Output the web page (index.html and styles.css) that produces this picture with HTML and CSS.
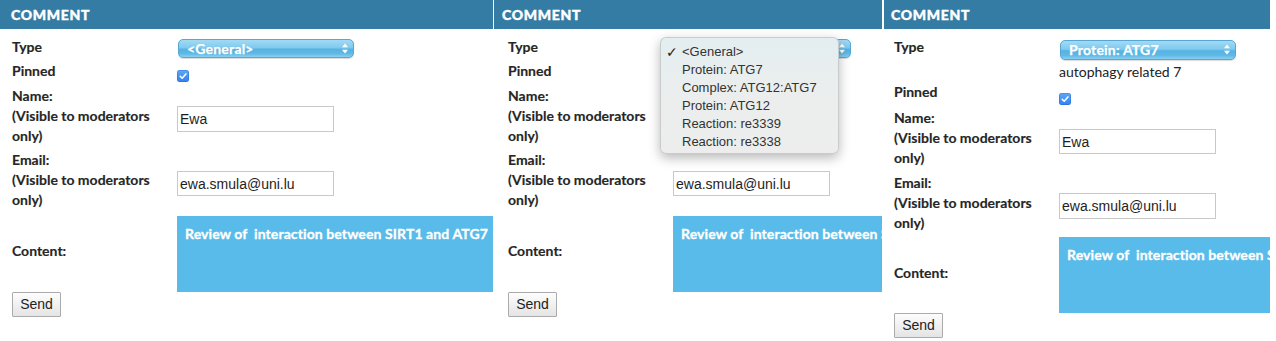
FILE: index.html
```html
<!DOCTYPE html>
<html lang="en">
<head>
<meta charset="utf-8">
<title>Comment</title>
<link rel="stylesheet" href="styles.css">
</head>
<body>
<div class="screens">

  <section class="panel p1">
    <header class="panel-head">COMMENT</header>
    <div class="form">
      <div class="label label-top">Type</div>
      <div class="field field-top">
        <div class="select"><span>&lt;General&gt;</span><svg class="arrows" width="6" height="11" viewBox="0 0 6 11"><path d="M0 4.2 L3 0.5 L6 4.2Z M0 6.8 L3 10.5 L6 6.8Z" fill="#fff"/></svg></div>
      </div>
      <div class="label label-top">Pinned</div>
      <div class="field field-top"><span class="check"><svg width="12" height="12" viewBox="0 0 12 12"><path d="M3.2 6.3 L5.2 8.3 L8.9 3.9" fill="none" stroke="#fff" stroke-width="1.5" stroke-linecap="round" stroke-linejoin="round"/></svg></span></div>
      <div class="label">Name:<br>(Visible to moderators only)</div>
      <div class="field"><input class="text-input" type="text" value="Ewa"></div>
      <div class="label">Email:<br>(Visible to moderators only)</div>
      <div class="field"><input class="text-input" type="text" value="ewa.smula@uni.lu"></div>
      <div class="label label-content">Content:</div>
      <div class="field field-top"><div class="content-box">Review of  interaction between SIRT1 and ATG7</div></div>
    </div>
    <div class="actions"><button class="send" type="button">Send</button></div>
  </section>

  <section class="panel p2">
    <header class="panel-head">COMMENT</header>
    <div class="form">
      <div class="label label-top">Type</div>
      <div class="field field-top">
        <div class="select sel-p2"><span>&lt;General&gt;</span><svg class="arrows" width="6" height="11" viewBox="0 0 6 11"><path d="M0 4.2 L3 0.5 L6 4.2Z M0 6.8 L3 10.5 L6 6.8Z" fill="#fff"/></svg></div>
      </div>
      <div class="label label-top">Pinned</div>
      <div class="field field-top"><span class="check"><svg width="12" height="12" viewBox="0 0 12 12"><path d="M3.2 6.3 L5.2 8.3 L8.9 3.9" fill="none" stroke="#fff" stroke-width="1.5" stroke-linecap="round" stroke-linejoin="round"/></svg></span></div>
      <div class="label">Name:<br>(Visible to moderators only)</div>
      <div class="field"><input class="text-input" type="text" value="Ewa"></div>
      <div class="label">Email:<br>(Visible to moderators only)</div>
      <div class="field"><input class="text-input" type="text" value="ewa.smula@uni.lu"></div>
      <div class="label label-content">Content:</div>
      <div class="field field-top"><div class="content-box">Review of  interaction between SIRT1 and ATG7</div></div>
    </div>
    <div class="actions"><button class="send" type="button">Send</button></div>

    <ul class="menu">
      <li class="menu-item selected"><span class="tick">✓</span>&lt;General&gt;</li>
      <li class="menu-item">Protein: ATG7</li>
      <li class="menu-item">Complex: ATG12:ATG7</li>
      <li class="menu-item">Protein: ATG12</li>
      <li class="menu-item">Reaction: re3339</li>
      <li class="menu-item">Reaction: re3338</li>
    </ul>
  </section>

  <section class="panel p3">
    <header class="panel-head">COMMENT</header>
    <div class="form">
      <div class="label label-top">Type</div>
      <div class="field field-top">
        <div class="select"><span>Protein: ATG7</span><svg class="arrows" width="6" height="11" viewBox="0 0 6 11"><path d="M0 4.2 L3 0.5 L6 4.2Z M0 6.8 L3 10.5 L6 6.8Z" fill="#fff"/></svg></div>
        <div class="desc">autophagy related 7</div>
      </div>
      <div class="label label-top">Pinned</div>
      <div class="field field-top"><span class="check"><svg width="12" height="12" viewBox="0 0 12 12"><path d="M3.2 6.3 L5.2 8.3 L8.9 3.9" fill="none" stroke="#fff" stroke-width="1.5" stroke-linecap="round" stroke-linejoin="round"/></svg></span></div>
      <div class="label">Name:<br>(Visible to moderators only)</div>
      <div class="field"><input class="text-input" type="text" value="Ewa"></div>
      <div class="label">Email:<br>(Visible to moderators only)</div>
      <div class="field"><input class="text-input" type="text" value="ewa.smula@uni.lu"></div>
      <div class="label label-content">Content:</div>
      <div class="field field-top"><div class="content-box">Review of  interaction between SIRT1 and ATG7</div></div>
    </div>
    <div class="actions"><button class="send" type="button">Send</button></div>
  </section>

</div>
</body>
</html>
```

FILE: styles.css
```css
html, body {
  margin: 0;
  padding: 0;
  background: #fff;
}

body {
  font-family: Lato, "Liberation Sans", sans-serif;
  color: #2a2a2a;
}

.screens {
  display: flex;
  width: 1276px;
  height: 341px;
  overflow: hidden;
}

.panel {
  position: relative;
  flex: none;
  height: 341px;
  overflow: hidden;
}

.p1 { width: 493px; }
.p2 { width: 388px; margin-left: 1px; }
.p3 { width: 386px; margin-left: 2px; }

.panel-head {
  height: 29px;
  background: #357ca5;
  color: #fff;
  font-weight: 900;
  font-size: 14px;
  display: flex;
  align-items: center;
  letter-spacing: 0.7px;
  -webkit-text-stroke: 0.4px #fff;
}

.p1 .panel-head { padding-left: 11px; }
.p2 .panel-head { padding-left: 8px; }
.p3 .panel-head { padding-left: 7px; }

.form {
  display: grid;
  grid-template-columns: 165px 1fr;
  row-gap: 4.5px;
  padding-top: 7.5px;
}

.p1 .form, .p1 .actions { padding-left: 12px; }
.p2 .form, .p2 .actions { padding-left: 14px; }
.p3 .form, .p3 .actions { padding-left: 10px; }
.p3 .form { padding-top: 8.3px; }

.label {
  font-weight: 700;
  font-size: 14px;
  line-height: 20px;
  align-self: center;
  color: #262626;
  -webkit-text-stroke: 0.15px #262626;
}

.label-top { align-self: start; }
.label-content { margin-bottom: 5px; }

.field { align-self: center; }
.field-top { align-self: start; }

.select {
  box-sizing: border-box;
  width: 176px;
  height: 19px;
  margin: 2.5px 0 -1.5px 1px;
  padding: 0 5px 0 8px;
  border-radius: 5px;
  border: 1px solid #56a6d6;
  background: linear-gradient(#a2daf4 0%, #80caee 45%, #55b2e3 55%, #5fb9e6 80%, #8ad0f0 100%);
  box-shadow: 0 1px 1px rgba(0,0,0,0.15);
  color: #fff;
  font-weight: 700;
  font-size: 14px;
  letter-spacing: 0.2px;
  -webkit-text-stroke: 0.25px #fff;
  display: flex;
  align-items: center;
  justify-content: space-between;
  white-space: nowrap;
}

.p3 .select {
  height: 20px;
  margin-top: 2.7px;
  margin-bottom: 0;
}

.sel-p2 { margin-left: 2px; }

.arrows { flex: none; }

.desc {
  font-size: 14px;
  line-height: 16px;
  margin: 4px 0 -2.8px 0;
  color: #222;
}

.check {
  display: block;
  width: 12px;
  height: 12px;
  margin: 9px 0 -1px 0;
  border-radius: 3px;
  background: linear-gradient(#5ea8f7, #3381ee);
  box-shadow: inset 0 0 0 0.5px rgba(0,60,160,0.4);
}

.check svg { display: block; }

.p3 .check { margin-top: 11px; }

.text-input {
  display: block;
  box-sizing: border-box;
  width: 157px;
  height: 25.5px;
  margin: 7px 0 0 0;
  padding: 0 2px;
  border: 1px solid #c9c9c9;
  border-radius: 0;
  background: #fff;
  font-family: "Liberation Sans", Arial, sans-serif;
  font-size: 14px;
  color: #1e1e1e;
  outline: none;
}

.content-box {
  box-sizing: border-box;
  width: 340px;
  height: 76px;
  margin-top: 1.5px;
  padding: 8px 8px 0 8px;
  background: #58bbe9;
  color: #fff;
  font-weight: 700;
  font-size: 14px;
  line-height: 20px;
  letter-spacing: 0.1px;
  -webkit-text-stroke: 0.3px #fff;
  white-space: pre;
}

.p3 .content-box { margin-top: 0; }

.actions { line-height: 0; }

.send {
  box-sizing: border-box;
  width: 49px;
  height: 25px;
  padding: 0;
  margin: 0;
  border: 1px solid #ababab;
  border-radius: 1px;
  background: linear-gradient(#fdfdfd, #e4e4e4);
  font-family: "Liberation Sans", Arial, sans-serif;
  font-size: 14px;
  color: #222;
  line-height: 23px;
}

.menu {
  position: absolute;
  left: 166px;
  top: 37px;
  width: 179px;
  height: 117px;
  box-sizing: border-box;
  margin: 0;
  padding: 4.5px 0 0 0;
  list-style: none;
  border-radius: 6px;
  border: 1px solid rgba(0,0,0,0.14);
  background: linear-gradient(#e3eef0 0%, #ebeeee 45%, #ededed 100%);
  box-shadow: 0 4px 12px rgba(0,0,0,0.28);
  font-family: "Liberation Sans", Arial, sans-serif;
  font-size: 13px;
  color: #333;
}

.menu-item {
  position: relative;
  height: 18px;
  line-height: 18px;
  padding-left: 21px;
  white-space: nowrap;
}

.tick {
  position: absolute;
  left: 5px;
  top: 0;
  font-family: "DejaVu Sans", sans-serif;
  font-size: 14px;
  font-weight: 700;
  color: #222;
}
```
